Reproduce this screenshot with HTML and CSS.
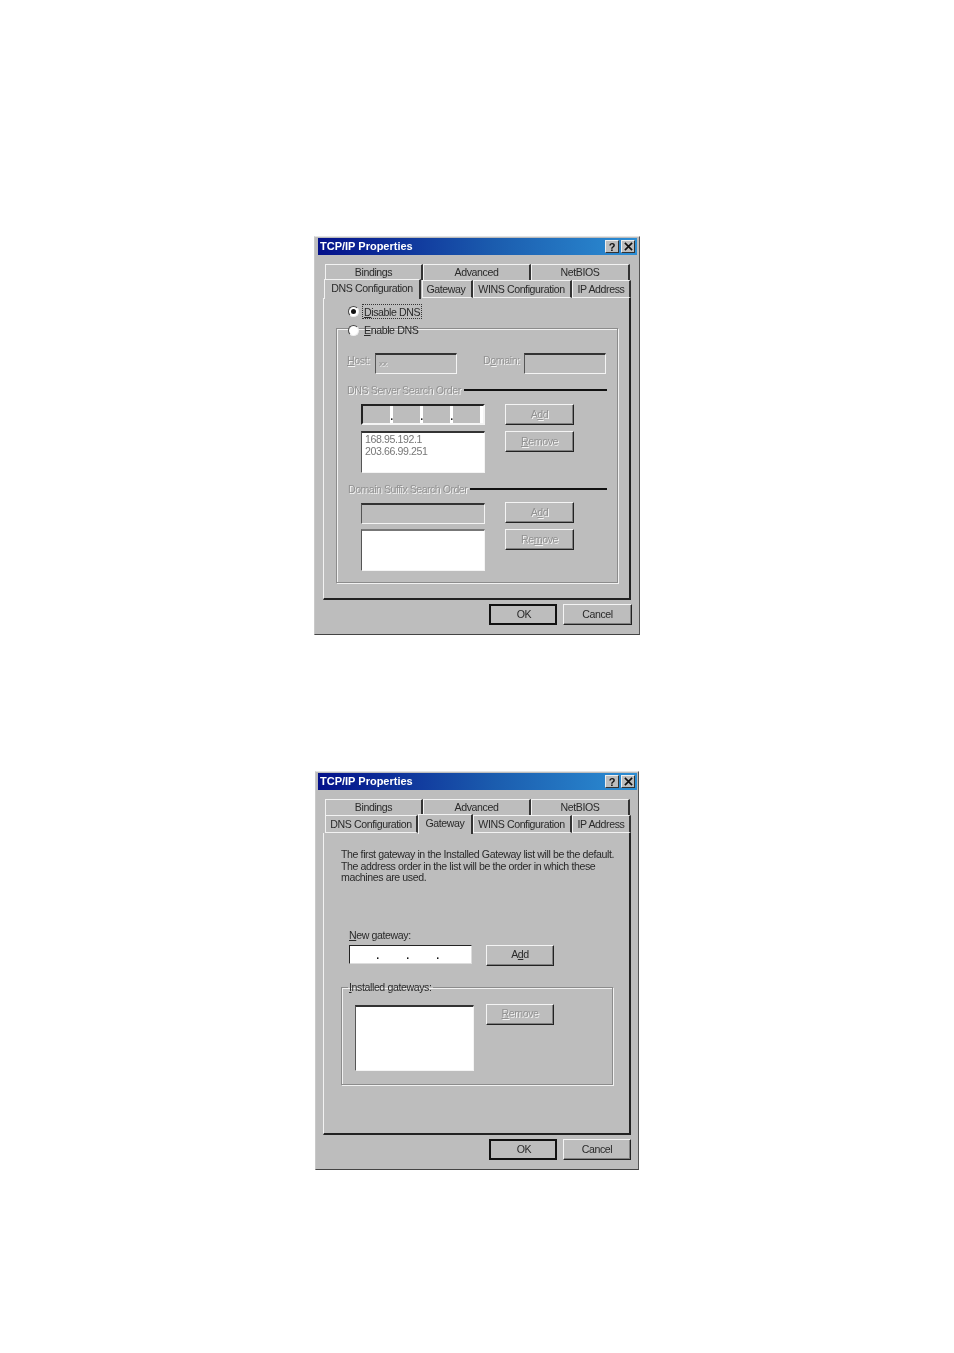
FILE: index.html
```html
<!DOCTYPE html>
<html lang="en">
<head>
<meta charset="utf-8">
<title>TCP/IP Properties</title>
<link rel="stylesheet" href="styles.css">
</head>
<body>
<main class="page">

<section class="dialog dialog-first">
  <header class="titlebar">
    <span class="title">TCP/IP Properties</span>
    <span class="tbtn">?</span>
    <span class="tbtn"><svg class="x-icon" viewBox="0 0 10 10"><path d="M1 1 9 9M9 1 1 9"/></svg></span>
  </header>
  <div class="tabs">
    <div class="tab-row tab-row-back">
      <span class="tab t-bind">Bindings</span>
      <span class="tab t-adv">Advanced</span>
      <span class="tab t-net">NetBIOS</span>
    </div>
    <div class="tab-row tab-row-front">
      <span class="tab t-dns active">DNS Configuration</span>
      <span class="tab t-gw">Gateway</span>
      <span class="tab t-wins">WINS Configuration</span>
      <span class="tab t-ip">IP Address</span>
    </div>
  </div>
  <div class="panel panel-dns">
    <div class="radio-row"><span class="radio checked"></span><span class="focus-label"><u>D</u>isable DNS</span></div>
    <div class="radio-row radio-row-second"><span class="radio"></span><span><u>E</u>nable DNS</span></div>
    <div class="dns-group">
      <div class="host-row">
        <span class="off host-label"><u>H</u>ost:</span>
        <span class="field grey host-field"><span class="off tiny">xx</span></span>
        <span class="off domain-label">D<u>o</u>main:</span>
        <span class="field grey domain-field"></span>
      </div>
      <div class="rule-row"><span class="off">DNS Server Search Order</span><span class="rule"></span></div>
      <div class="pair">
        <div class="ip-field">
          <span class="seg"><i>.</i></span><span class="seg"><i>.</i></span><span class="seg"><i>.</i></span><span class="seg"></span>
        </div>
        <span class="btn"><span class="off">A<u>d</u>d</span></span>
        <div class="field list off-list"><span class="off-plain">168.95.192.1</span><span class="off-plain">203.66.99.251</span></div>
        <span class="btn"><span class="off"><u>R</u>emove</span></span>
      </div>
      <div class="rule-row rule-row-second"><span class="off">Domain Suffix Search Order</span><span class="rule"></span></div>
      <div class="pair pair-second">
        <span class="field grey wide"></span>
        <span class="btn btn-raised"><span class="off">A<u>d</u>d</span></span>
        <span class="field list list-soft"></span>
        <span class="btn"><span class="off">Re<u>m</u>ove</span></span>
      </div>
    </div>
  </div>
  <footer class="actions">
    <span class="btn default">OK</span>
    <span class="btn">Cancel</span>
  </footer>
</section>

<section class="dialog dialog-second">
  <header class="titlebar">
    <span class="title">TCP/IP Properties</span>
    <span class="tbtn">?</span>
    <span class="tbtn"><svg class="x-icon" viewBox="0 0 10 10"><path d="M1 1 9 9M9 1 1 9"/></svg></span>
  </header>
  <div class="tabs">
    <div class="tab-row tab-row-back">
      <span class="tab t-bind">Bindings</span>
      <span class="tab t-adv">Advanced</span>
      <span class="tab t-net">NetBIOS</span>
    </div>
    <div class="tab-row tab-row-front">
      <span class="tab t-dns2">DNS Configuration</span>
      <span class="tab t-gw2 active">Gateway</span>
      <span class="tab t-wins">WINS Configuration</span>
      <span class="tab t-ip">IP Address</span>
    </div>
  </div>
  <div class="panel panel-gw">
    <p class="intro">The first gateway in the Installed Gateway list will be the default.<br>The address order in the list will be the order in which these<br>machines are used.</p>
    <div class="new-label"><u>N</u>ew gateway:</div>
    <div class="new-row">
      <div class="ip-white"><i>.</i><i>.</i><i>.</i></div>
      <span class="btn"><span>A<u>d</u>d</span></span>
    </div>
    <fieldset class="gw-group">
      <legend><u>I</u>nstalled gateways:</legend>
      <div class="gw-row">
        <span class="field list gw-list"></span>
        <span class="btn btn-raised"><span class="off"><u>R</u>emove</span></span>
      </div>
    </fieldset>
  </div>
  <footer class="actions">
    <span class="btn default">OK</span>
    <span class="btn">Cancel</span>
  </footer>
</section>

</main>
</body>
</html>
```

FILE: styles.css
```css
* { box-sizing: border-box; }
html, body { margin: 0; padding: 0; background: #fff; }
body { font-family: "Liberation Sans", Arial, sans-serif; font-size: 10.6px; letter-spacing: -0.4px; color: #2a2a2a; }

.page { height: 1353px; padding-top: 236px; overflow: hidden; }

.dialog {
  width: 326px;
  height: 399px;
  background: #bdbdbd;
  border-left: 1px solid #c9c9c9;
  border-top: 1px solid #e4e4e4;
  border-right: 1px solid #555;
  border-bottom: 1px solid #444;
  padding: 1px 2px 0 3px;
  filter: blur(0.25px);
}
.dialog-first { margin-left: 314px; }
.dialog-second { margin-left: 315px; margin-top: 136px; width: 324px; padding-right: 1px; padding-left: 2px; }
.dialog-second .btn { width: 68px; }

.titlebar {
  display: flex;
  align-items: center;
  gap: 2px;
  height: 17px;
  padding: 0 2px;
  background: linear-gradient(90deg, #04108a 0%, #1b5cae 55%, #2c8ed4 100%);
}
.title { flex: 1; color: #fff; font-weight: bold; font-size: 11px; letter-spacing: 0; padding-bottom: 1px; }
.tbtn {
  display: flex;
  align-items: center;
  justify-content: center;
  width: 14px;
  height: 13px;
  background: #bdbdbd;
  border: 1px solid;
  border-color: #eee #333 #333 #eee;
  font-weight: bold;
  font-size: 11px;
  color: #111;
}
.x-icon { width: 9px; height: 9px; }
.x-icon path { stroke: #111; stroke-width: 1.8; fill: none; }

.tabs { margin: 9px 0 0 5px; height: 34px; }
.tab-row { display: flex; height: 16px; padding-left: 2px; }
.tab-row-front { height: 18px; padding-left: 1px; }
.tab {
  display: flex;
  align-items: center;
  justify-content: center;
  height: 100%;
  background: #bdbdbd;
  border-top: 1px solid #f2f2f2;
  border-left: 1px solid #f2f2f2;
  border-right: 2px solid #333;
  white-space: nowrap;
}
.tab-row-back .tab { padding-bottom: 1px; line-height: 11px; }
.tab-row-front .tab { border-bottom: 1px solid #f2f2f2; }
.tab-row-front .tab.active {
  height: 20px;
  margin-top: -1px;
  border-bottom: 0;
  padding-bottom: 4px;
  position: relative;
  z-index: 1;
}
.t-bind { width: 98px; }
.t-adv { width: 108px; }
.t-net { width: 99px; }
.t-dns { width: 97px; }
.t-gw { width: 51px; margin-left: 1px; padding-right: 2px; }
.t-wins { width: 99px; padding-right: 1px; }
.t-ip { width: 59px; }
.t-dns2 { width: 93px; margin-left: 1px; }
.t-gw2 { width: 55px; }

.panel {
  height: 302px;
  margin-left: 5px;
  width: 308px;
  border-left: 1px solid #f2f2f2;
  border-right: 2px solid #222;
  border-bottom: 2px solid #222;
}

.panel-dns { padding: 5px 0 0 12px; }
.radio-row { display: flex; align-items: center; gap: 5px; height: 16px; margin-left: 12px; position: relative; z-index: 1; }
.radio-row-second { margin-top: 3px; }
.radio {
  width: 11px;
  height: 11px;
  flex: none;
  border-radius: 50%;
  background: #fff;
  border: 1.5px solid;
  border-color: #444 #eee #eee #444;
  display: flex;
  align-items: center;
  justify-content: center;
}
.radio.checked::after { content: ""; width: 5px; height: 5px; border-radius: 50%; background: #111; }
.focus-label { outline: 1px dotted #333; padding: 1px 1px 0; margin-left: -1px; }

.dns-group {
  width: 282px;
  height: 255px;
  margin-top: -10px;
  border: 1px solid #8c8c8c;
  box-shadow: 1px 1px 0 #f2f2f2, inset 1px 1px 0 #f2f2f2;
  padding: 24px 0 0 10px;
}
.off { color: #929292; text-shadow: 1px 1px 0 #f4f4f4; }
.off-plain { display: block; color: #777; line-height: 12px; }
.tiny { display: block; font-size: 8px; letter-spacing: 0; margin: 4px 0 0 3px; }
.host-row { display: flex; align-items: flex-start; height: 21px; }
.host-label { width: 28px; margin-top: 1px; }
.host-field { width: 82px; }
.domain-label { width: 41px; margin: 1px 0 0 26px; }
.domain-field { width: 82px; }

.field {
  display: block;
  border-style: solid;
  border-width: 2px 1px 1px 1px;
  border-color: #333 #f4f4f4 #f4f4f4 #555;
}
.grey { background: #bdbdbd; height: 21px; }
.list { background: #fff; height: 42px; padding: 0 3px; }
.list-soft { border-top-color: #777; }
.wide { width: 124px; }

.rule-row { display: flex; align-items: center; gap: 3px; height: 13px; margin-top: 9px; padding-right: 10px; }
.rule-row-second { margin-top: 9px; margin-left: 1px; letter-spacing: -0.5px; }
.rule { flex: 1; height: 2px; background: #111; }

.pair {
  display: grid;
  grid-template-columns: 124px 69px;
  grid-template-rows: 21px 42px;
  column-gap: 20px;
  row-gap: 6px;
  margin: 8px 0 0 14px;
  align-items: start;
}
.pair-second { row-gap: 5px; }
.ip-field {
  display: flex;
  height: 21px;
  background: #bdbdbd;
  border-style: solid;
  border-width: 2px;
  border-color: #222 #f4f4f4 #f4f4f4 #222;
}
.seg { flex: 1; border-right: 3px solid #fff; position: relative; }
.seg i { position: absolute; right: -3px; bottom: 2px; font-style: normal; font-weight: bold; color: #222; line-height: 10px; width: 3px; text-align: center; }

.btn {
  display: flex;
  align-items: center;
  justify-content: center;
  width: 69px;
  height: 21px;
  padding-bottom: 2px;
  background: #bdbdbd;
  border: 1px solid;
  border-color: #f4f4f4 #222 #222 #f4f4f4;
  box-shadow: inset -1px -1px 0 #808080;
}
.btn-raised { margin-top: -1px; }
.default { border: 2px solid #111; box-shadow: none; width: 68px; padding-left: 2px; }

.actions { display: flex; justify-content: flex-end; gap: 6px; margin-top: 4px; padding-right: 5px; }
.dialog-second .actions { padding-right: 6px; }

.panel-gw { padding: 16px 0 0 17px; }
.intro { margin: 0; line-height: 11.6px; }
.new-label { margin: 45px 0 0 8px; height: 12px; line-height: 12px; }
.new-row { display: flex; gap: 14px; margin: 4px 0 0 8px; height: 21px; }
.ip-white {
  display: flex;
  gap: 27px;
  width: 123px;
  height: 19px;
  padding-left: 26px;
  background: #fff;
  border: 1px solid;
  border-color: #222 #ddd #ddd #222;
}
.ip-white i { width: 3px; text-align: center; font-style: normal; font-weight: bold; color: #111; line-height: 19px; }
.gw-group {
  margin: 16px 0 0 0;
  padding: 0 0 0 13px;
  width: 272px;
  height: 103px;
  border: 1px solid #8c8c8c;
  box-shadow: 1px 1px 0 #f2f2f2, inset 1px 1px 0 #f2f2f2;
}
.gw-group legend { margin-left: -7px; padding: 0 1px; line-height: 11px; }
.gw-row { display: flex; align-items: flex-start; gap: 12px; margin-top: 12px; }
.gw-list { width: 119px; height: 66px; }
```
